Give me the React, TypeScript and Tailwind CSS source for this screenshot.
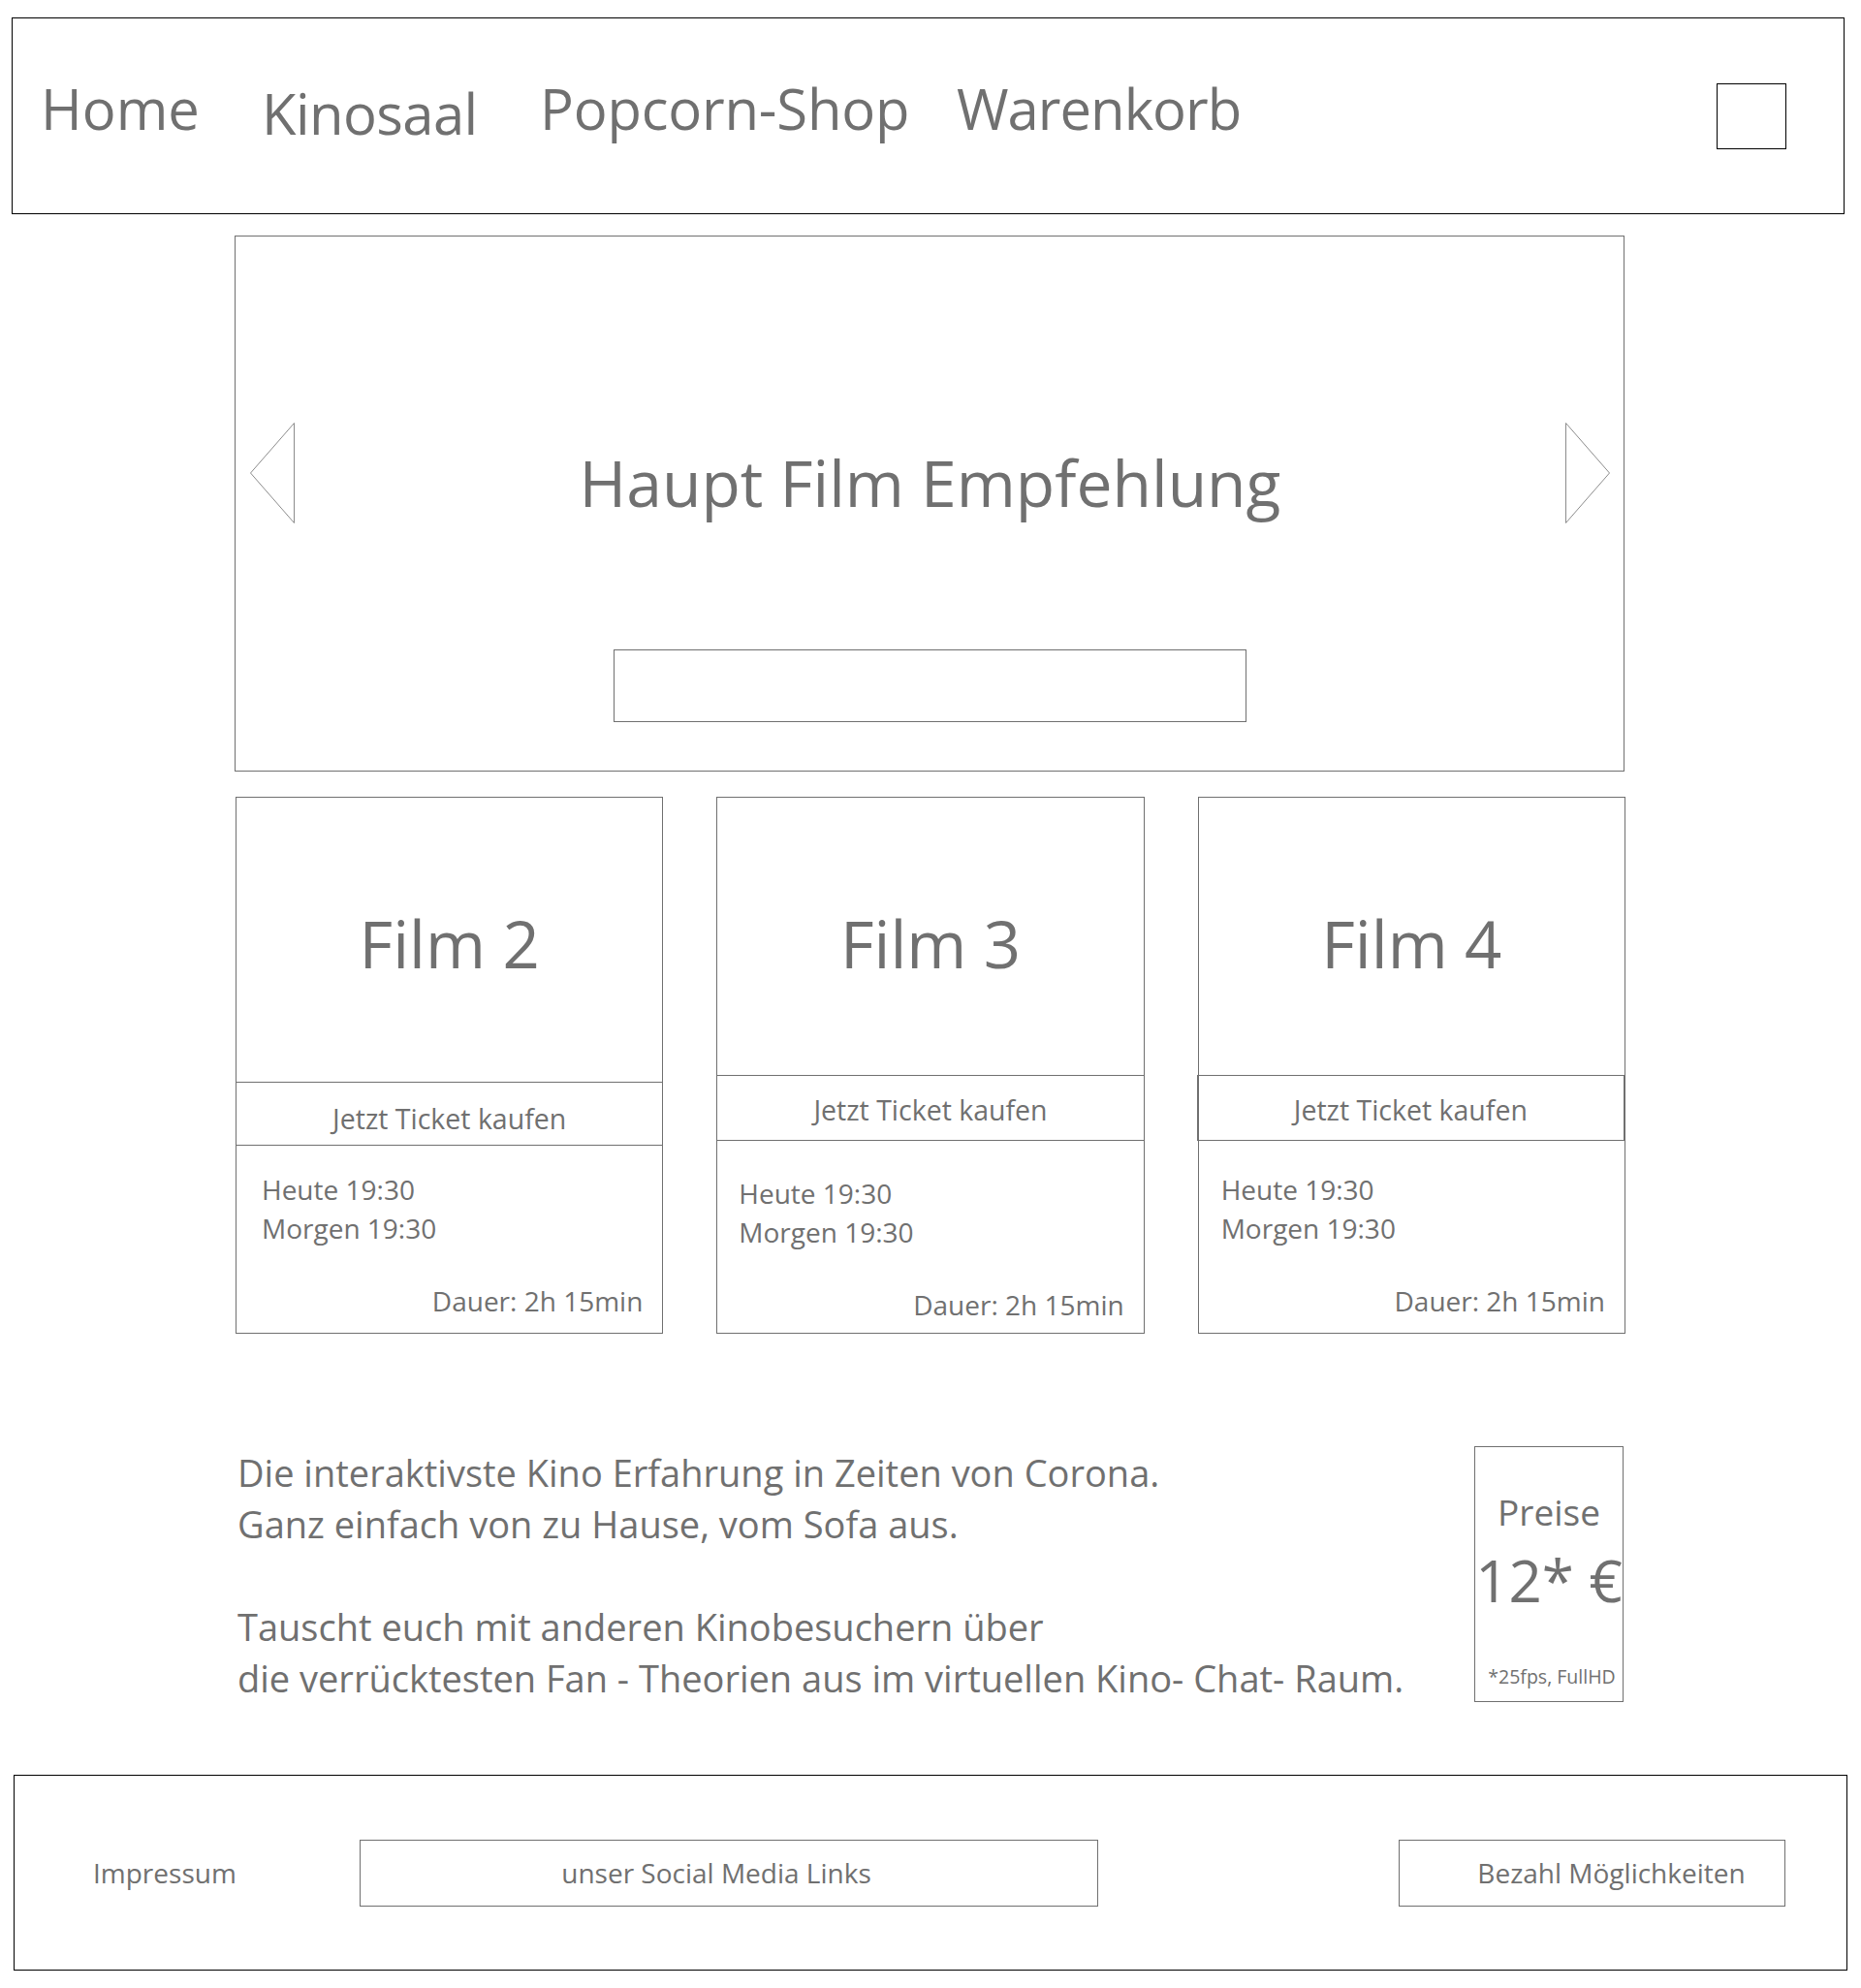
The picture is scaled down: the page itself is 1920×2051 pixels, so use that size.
const NAV = [
  { label: 'Home', w: 'w-[228px]', mt: 'mt-[64px]', track: '' },
  { label: 'Kinosaal', w: 'w-[287px]', mt: 'mt-[69px]', track: 'tracking-[-0.6px]' },
  { label: 'Popcorn-Shop', w: 'w-[430px]', mt: 'mt-[64px]', track: 'tracking-[-0.2px]' },
  { label: 'Warenkorb', w: 'w-[300px]', mt: 'mt-[64px]', track: 'tracking-[-1px]' },
];

// per-card offsets, the wireframe is not perfectly aligned
const FILMS = [
  { title: 'Film 2', top: 'h-[293px]', btn: 'h-[66px] border-y', btnPt: 'pt-[23px]', info: 'pt-[25px] pl-[26px] pb-[13px]' },
  { title: 'Film 3', top: 'h-[286px]', btn: 'h-[68px] border-y', btnPt: 'pt-[21px]', info: 'pt-[34px] pl-[22px] pb-[9px]' },
  { title: 'Film 4', top: 'h-[286px]', btn: 'h-[68px] border -ml-[2px] border-[#666]', btnPt: 'pt-[21px]', info: 'pt-[30px] pl-[23px] pb-[13px]' },
];

function Arrow({ dir }: { dir: 'left' | 'right' }) {
  const points = dir === 'left' ? '45.5,0.5 0.5,52 45.5,103.5' : '0.5,0.5 45.5,52 0.5,103.5';
  return (
    <svg width="46" height="104" viewBox="0 0 46 104" className="shrink-0">
      <polygon points={points} fill="none" stroke="#8c8c8c" strokeWidth="1" />
    </svg>
  );
}

function FilmCard({ film }: { film: (typeof FILMS)[number] }) {
  return (
    <div className="h-[554px] border border-[#707070] flex flex-col">
      <div className={`${film.top} pt-[117px] text-center text-[67px] leading-none`}>{film.title}</div>
      <div className={`${film.btn} ${film.btnPt} border-[#707070] text-center text-[28.5px] leading-none`}>
        Jetzt Ticket kaufen
      </div>
      <div className={`flex-1 flex flex-col pr-[20px] text-[28px] leading-[40px] ${film.info}`}>
        <span>Heute 19:30</span>
        <span>Morgen 19:30</span>
        <span className="mt-auto text-right">Dauer: 2h 15min</span>
      </div>
    </div>
  );
}

export default function App() {
  return (
    <div className="w-[1920px] h-[2051px] overflow-hidden bg-white pt-[18px] text-[#707070] font-['Open_Sans',sans-serif]">
      <header className="ml-[12px] w-[1891px] h-[203px] border border-black flex items-start">
        <nav className="flex items-start pl-[29px]">
          {NAV.map((item) => (
            <span key={item.label} className={`${item.w} ${item.mt} ${item.track} text-[58px] leading-none whitespace-nowrap`}>
              {item.label}
            </span>
          ))}
        </nav>
        <div className="ml-auto mr-[59px] mt-[67px] w-[72px] h-[68px] border border-black" />
      </header>

      <section className="mt-[22px] ml-[242px] w-[1434px] h-[553px] border border-[#707070] flex items-start">
        <div className="ml-[15px] mt-[192px]">
          <Arrow dir="left" />
        </div>
        <div className="flex-1 flex flex-col items-center">
          <h1 className="mt-[220px] text-[66px] leading-none whitespace-nowrap">Haupt Film Empfehlung</h1>
          <div className="mt-[140px] w-[653px] h-[75px] border border-[#707070]" />
        </div>
        <div className="mr-[14px] mt-[192px]">
          <Arrow dir="right" />
        </div>
      </section>

      <section className="mt-[26px] ml-[243px] w-[1434px] grid grid-cols-3 gap-x-[55px]">
        {FILMS.map((film) => (
          <FilmCard key={film.title} film={film} />
        ))}
      </section>

      <section className="mt-[116px] ml-[242px] w-[1434px] h-[264px] flex items-start justify-between">
        <div className="mt-[1px] ml-[3px] text-[38px] leading-[53px]">
          <p>Die interaktivste Kino Erfahrung in Zeiten von Corona.</p>
          <p className="mb-[53px]">Ganz einfach von zu Hause, vom Sofa aus.</p>
          <p>Tauscht euch mit anderen Kinobesuchern über</p>
          <p>die verrücktesten Fan - Theorien aus im virtuellen Kino- Chat- Raum.</p>
        </div>
        <div className="mr-[1px] w-[154px] h-[264px] border border-[#707070] flex flex-col items-center">
          <span className="mt-[48px] text-[37px] leading-none">Preise</span>
          <span className="mt-[22px] text-[60px] leading-none whitespace-nowrap">12* €</span>
          <span className="mt-auto mb-[16px] pl-[6px] text-[19.5px] leading-none whitespace-nowrap">*25fps, FullHD</span>
        </div>
      </section>

      <footer className="mt-[75px] ml-[14px] w-[1892px] h-[202px] border border-black flex items-center text-[28px]">
        <span className="ml-[81px] w-[275px]">Impressum</span>
        <div className="w-[762px] h-[69px] border border-[#707070] flex items-center justify-center pr-[26px]">
          unser Social Media Links
        </div>
        <div className="ml-auto mr-[63px] w-[399px] h-[69px] border border-[#707070] flex items-center justify-center pl-[40px]">
          Bezahl Möglichkeiten
        </div>
      </footer>
    </div>
  );
}
